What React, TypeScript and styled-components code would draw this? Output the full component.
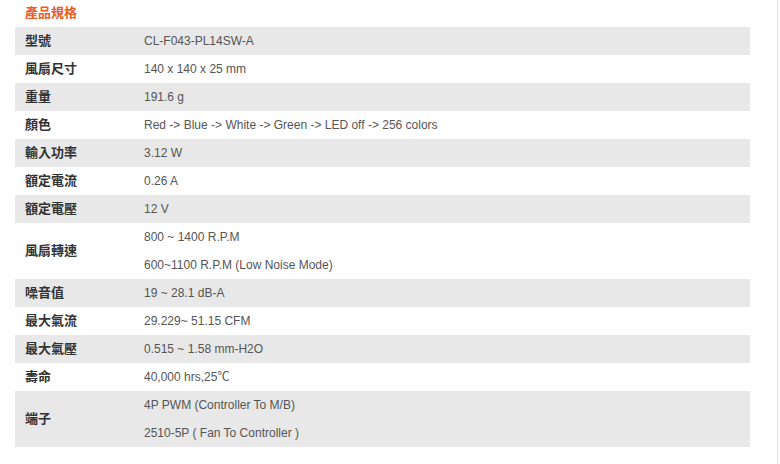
import styled, { createGlobalStyle } from "styled-components";

interface Spec {
  label: string;
  values: string[];
}

const specs: Spec[] = [
  { label: "型號", values: ["CL-F043-PL14SW-A"] },
  { label: "風扇尺寸", values: ["140 x 140 x 25 mm"] },
  { label: "重量", values: ["191.6 g"] },
  { label: "顏色", values: ["Red -> Blue -> White -> Green -> LED off -> 256 colors"] },
  { label: "輸入功率", values: ["3.12 W"] },
  { label: "額定電流", values: ["0.26 A"] },
  { label: "額定電壓", values: ["12 V"] },
  { label: "風扇轉速", values: ["800 ~ 1400 R.P.M", "600~1100 R.P.M (Low Noise Mode)"] },
  { label: "噪音值", values: ["19 ~ 28.1 dB-A"] },
  { label: "最大氣流", values: ["29.229~ 51.15 CFM"] },
  { label: "最大氣壓", values: ["0.515 ~ 1.58 mm-H2O"] },
  { label: "壽命", values: ["40,000 hrs,25℃"] },
  { label: "端子", values: ["4P PWM (Controller To M/B)", "2510-5P ( Fan To Controller )"] },
];

const GlobalStyle = createGlobalStyle`
  body {
    margin: 0;
    background: #fff;
    overflow: hidden;
    font-family: "Liberation Sans", Arial, "Noto Sans CJK TC", sans-serif;
  }
`;

const Panel = styled.div`
  box-sizing: border-box;
  width: 782px;
  height: 470px;
  margin-left: -4px;
  padding-left: 18px;
  border: 1px solid #dcdcdc;
  border-top: none;
  border-radius: 0 0 8px 8px;
  background: #fff;
`;

const Title = styled.h2`
  margin: 0;
  height: 23px;
  padding-left: 10px;
  padding-bottom: 4px;
  display: flex;
  align-items: center;
  font-family: "Noto Sans CJK TC", sans-serif;
  font-size: 13px;
  line-height: 13px;
  font-weight: 700;
  color: #ee5a24;
`;

const Table = styled.div`
  width: 735px;
  display: flex;
  flex-direction: column;
`;

const Row = styled.div<{ $shaded: boolean }>`
  display: grid;
  grid-template-columns: 129px 1fr;
  background: ${(p) => (p.$shaded ? "#e8e8e8" : "#fff")};
`;

const Label = styled.div`
  padding-left: 10px;
  padding-bottom: 3px;
  display: flex;
  align-items: center;
  font-family: "Noto Sans CJK TC", sans-serif;
  font-size: 13px;
  line-height: 13px;
  font-weight: 700;
  color: #333;
`;

const Values = styled.div`
  display: flex;
  flex-direction: column;
`;

const Value = styled.div`
  height: 28px;
  line-height: 28px;
  font-size: 12px;
  color: #555;
  white-space: nowrap;
`;

export default function App(): JSX.Element {
  return (
    <>
      <GlobalStyle />
      <Panel>
        <Title>產品規格</Title>
        <Table>
          {specs.map((s, i) => (
            <Row key={s.label} $shaded={i % 2 === 0}>
              <Label>{s.label}</Label>
              <Values>
                {s.values.map((v) => (
                  <Value key={v}>{v}</Value>
                ))}
              </Values>
            </Row>
          ))}
        </Table>
      </Panel>
    </>
  );
}
